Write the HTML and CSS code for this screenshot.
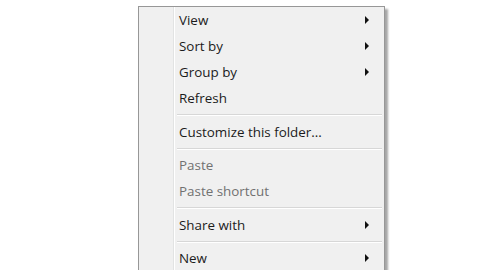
FILE: index.html
```html
<!DOCTYPE html>
<html>
<head>
<meta charset="utf-8">
<link rel="stylesheet" href="styles.css">
</head>
<body>
<div class="menu">
  <div class="item sub">View</div>
  <div class="item sub">Sort by</div>
  <div class="item sub">Group by</div>
  <div class="item">Refresh</div>
  <div class="sep"></div>
  <div class="item">Customize this folder...</div>
  <div class="sep"></div>
  <div class="item disabled">Paste</div>
  <div class="item disabled">Paste shortcut</div>
  <div class="sep"></div>
  <div class="item sub">Share with</div>
  <div class="sep"></div>
  <div class="item sub">New</div>
</div>
</body>
</html>
```
FILE: styles.css
```css
html, body {
  margin: 0;
  padding: 0;
  background: #ffffff;
  overflow: hidden;
  height: 270px;
}
.menu {
  margin: 6px 0 0 138px;
  width: 243px;
  height: 280px;
  border: 1px solid #979797;
  padding: 0 1px;
  background: linear-gradient(to right, #f0f0f0 34px, #e2e3e3 34px, #e2e3e3 35px, #ffffff 35px, #ffffff 36px, #f0f0f0 36px);
  box-shadow: 3px 3px 2px rgba(0, 0, 0, 0.35);
  font-family: "Open Sans", "Liberation Sans", sans-serif;
  font-size: 13.4px;
  color: #1b1b1b;
}
.item {
  position: relative;
  height: 26px;
  line-height: 26px;
  padding-left: 39px;
}
.item.disabled {
  color: #717171;
}
.item.sub::after {
  content: "";
  position: absolute;
  right: 14px;
  top: 9px;
  width: 0;
  height: 0;
  border-top: 4px solid transparent;
  border-bottom: 4px solid transparent;
  border-left: 4px solid #111111;
}
.sep {
  height: 7.5px;
  margin-left: 37px;
  margin-right: 1px;
  background: linear-gradient(to bottom, transparent 3px, #d7d7d7 3px, #d7d7d7 4px, #ffffff 4px, #ffffff 5px, transparent 5px);
}
```
